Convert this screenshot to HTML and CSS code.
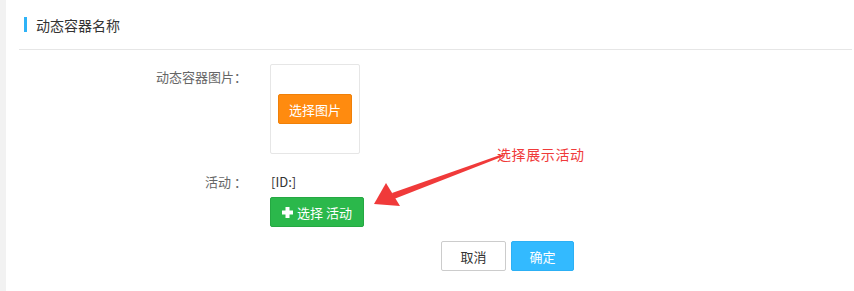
FILE: index.html
```html
<!DOCTYPE html>
<html lang="zh-CN">
<head>
    <meta charset="UTF-8">
    <title>动态容器</title>
    <link rel="stylesheet" href="styles.css">
</head>
<body>

<div class="page">
    <div class="side"></div>

    <div class="panel">
        <div class="panel-head">
            <span class="head-bar"></span>
            <span class="head-title">动态容器名称</span>
        </div>

        <div class="form">
            <div class="form-row">
                <div class="form-label">动态容器图片：</div>
                <div class="form-field">
                    <div class="upload-box">
                        <button class="btn btn-orange">选择图片</button>
                    </div>
                </div>
            </div>

            <div class="form-row row-activity">
                <div class="form-label">活动 ：</div>
                <div class="form-field">
                    <div class="activity-id">[ID:]</div>
                    <button class="btn btn-green">
                        <svg class="plus" width="11" height="11" viewBox="0 0 11 11">
                            <rect x="3.5" y="0" width="4" height="11" fill="#fff"/>
                            <rect x="0" y="3.5" width="11" height="4" fill="#fff"/>
                        </svg>选择 活动</button>
                </div>
            </div>

            <div class="form-actions">
                <button class="btn btn-cancel">取消</button>
                <button class="btn btn-blue">确定</button>
            </div>
        </div>

        <!-- annotation -->
        <div class="note">选择展示活动</div>
        <svg class="arrow" width="140" height="70" viewBox="0 0 140 70">
            <polygon points="130,8 19,47 21,53 131,10" fill="#f03a3a"/>
            <polygon points="1,58 13,37 27,60" fill="#f03a3a"/>
        </svg>
    </div>
</div>

</body>
</html>
```

FILE: styles.css
```css
body {
    margin: 0;
    font-family: "Noto Sans CJK SC", "Microsoft YaHei", sans-serif;
    font-size: 13px;
    color: #333;
    background: #fff;
}

.page {
    display: flex;
    height: 291px;
}

.side {
    width: 6px;
    background: #f2f2f2;
}

.panel {
    flex: 1;
    position: relative;
    background: #fff;
}

.panel-head {
    display: flex;
    align-items: center;
    height: 49px;
    margin: 0 2px 0 13px;
    padding-left: 5px;
    border-bottom: 1px solid #e6e6e6;
}

.head-bar {
    width: 3px;
    height: 15px;
    margin-right: 9px;
    margin-top: -1px;
    background: #2fb3f7;
}

.head-title {
    font-size: 14px;
    color: #333;
}

.form {
    padding-top: 14px;
}

.form-row {
    display: flex;
}

.form-label {
    width: 241px;
    text-align: right;
    color: #666;
    line-height: 26px;
}

.form-field {
    margin-left: 23px;
}

.upload-box {
    width: 88px;
    height: 88px;
    border: 1px solid #e6e6e6;
    border-radius: 2px;
    display: flex;
    align-items: center;
    justify-content: center;
}

.btn {
    font-family: inherit;
    font-size: 13px;
    height: 30px;
    border-radius: 2px;
    cursor: pointer;
    padding: 0;
}

.btn-orange {
    width: 74px;
    background: #ff8b0f;
    border: 1px solid #f08008;
    color: #fff;
}

.row-activity {
    margin-top: 15px;
}

.activity-id {
    line-height: 26px;
    color: #333;
    margin-left: 1px;
}

.btn-green {
    display: flex;
    align-items: center;
    justify-content: center;
    width: 94px;
    margin-top: 2px;
    background: #2bb84b;
    border: 1px solid #25a842;
    color: #fff;
}

.plus {
    margin-right: 4px;
}

.form-actions {
    display: flex;
    gap: 5px;
    margin: 14px 0 0 435px;
}

.btn-cancel {
    width: 65px;
    background: #fff;
    border: 1px solid #ccc;
    color: #333;
}

.btn-blue {
    width: 63px;
    background: #33baff;
    border: 1px solid #2cb0f5;
    color: #fff;
}

.note {
    position: absolute;
    left: 491px;
    top: 144px;
    color: #f03a3a;
    font-size: 14px;
    letter-spacing: 0.6px;
}

.arrow {
    position: absolute;
    left: 367px;
    top: 146px;
}
```
